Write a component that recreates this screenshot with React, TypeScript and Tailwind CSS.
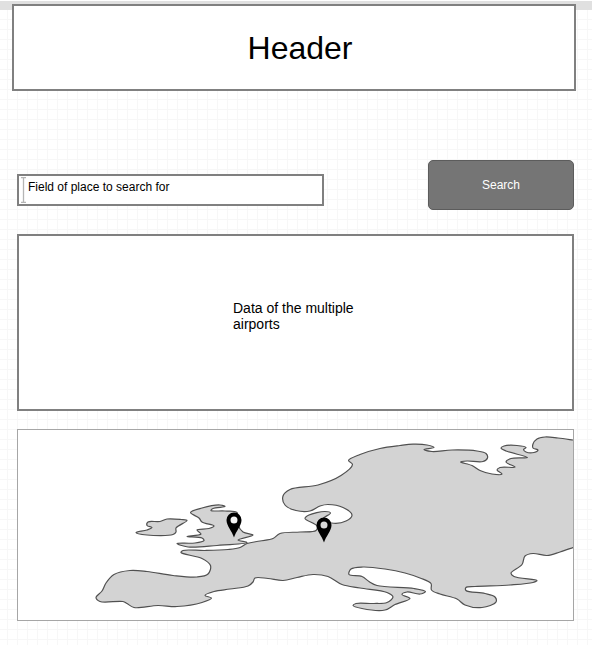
import React from "react";

type Point = [number, number];

const mainland: Point[] = [
  [580, 441], [573, 440], [558, 438], [545, 437], [537, 439], [533, 444], [533, 448], [538, 450], [534, 452.5], [526, 452], [523.5, 449.5],
  [526, 447.5], [517, 445.5], [504, 446], [501, 448], [506, 451], [527.5, 457.5], [511, 458.5], [506, 462], [515, 467],
  [500, 467.5], [497, 470], [502, 474], [492, 474], [480, 470.5], [472, 465.5], [460.5, 462], [467, 461], [483, 461.5], [487.5, 458],
  [486, 453.5], [477, 451], [452, 450], [432, 451.5], [424, 449.5], [434, 447.5], [427, 445], [413, 444.2], [400, 445.5],
  [380, 448.5], [360, 454.5], [348.5, 460.5], [352.5, 464.5], [341, 475.5], [318, 485], [290, 489.5], [283, 496], [285, 505],
  [296, 510.5], [310, 511], [320, 506], [328, 504.5], [343, 507.5], [352, 515], [346, 521], [331.5, 523], [323, 519], [330.5, 513],
  [325, 511.5], [309, 515], [305, 518.5], [317, 526], [316, 530.5], [300, 532], [280, 533.5], [273, 538.5], [260, 541], [247, 543.5],
  [240, 547.5], [228, 549.5], [205, 550.5], [183, 550.5], [181, 552.5], [202, 558.5], [210.5, 565.5], [208, 574], [197, 577],
  [173, 575.5], [147, 571.5], [130, 570.5], [114, 574.5], [106, 583], [102, 591], [96, 597.5], [100, 601.5], [123, 601.5],
  [127, 603.5], [134, 607.5], [158, 605.5], [177, 606.5], [202, 602.5], [211.5, 598], [205, 595.5], [214, 591.5], [230, 589],
  [248, 586], [253, 582], [255, 578], [268, 578.5], [283, 580.5], [297, 577.5], [313, 574.5], [328, 576.5], [342, 584.5],
  [360, 588], [387, 592.5], [393, 597], [387, 602.5], [374, 603.5], [356, 603.5], [353, 605.5], [362, 608.5], [385, 610],
  [395, 604.5], [410, 598.5], [402, 594.5], [407, 592], [420, 594], [425.5, 591.5], [414, 588.5], [377, 585.5], [369, 581.5],
  [362, 576.5], [349, 574.5], [351, 569], [363, 567], [385, 569], [405, 573], [420, 578], [431, 583.5], [431.5, 590],
  [440, 594], [457, 599], [465, 605], [482, 607.5], [496, 602], [495, 597], [485, 593.5], [466, 590.5], [466, 587.5],
  [475, 586.5], [510, 585], [533, 582.5], [537, 580.5], [514, 576.5], [511, 573], [522, 564.5], [525, 556], [533, 553.5],
  [547, 555.5], [560, 552], [573, 547.5], [580, 545],
];

const britain: Point[] = [
  [225, 506.5], [220, 505], [202, 508], [190.5, 512.5], [199, 518], [202, 522], [214, 526], [209, 528.5], [197, 530], [201, 534],
  [187, 536.5], [202, 538], [204, 540.5], [195, 543], [177, 543.5], [188, 547], [217, 545.5], [247, 542.5], [238, 540],
  [253, 535], [243, 532], [238, 525], [237, 512.5], [225, 511], [211, 510.5], [213, 508.5],
];

const ireland: Point[] = [
  [187, 520.5], [181, 519.5], [167, 519], [160, 521.5], [148, 522], [147, 525.5], [152, 527.5], [147, 530], [136, 532.5],
  [147, 535], [173, 534.5], [176, 532], [176, 528],
];

// Centripetal Catmull-Rom curve through every point of a coastline.
function coastline(points: Point[]): string {
  const n = points.length;
  const at = (i: number) => points[(i + n) % n];
  const gap = (p: Point, q: Point) => Math.sqrt(Math.hypot(q[0] - p[0], q[1] - p[1]));
  const handle = (before: Point, p: Point, after: Point): Point => {
    const u = gap(before, p);
    const v = gap(p, after);
    const axis = (k: 0 | 1) =>
      p[k] + (v * v * (p[k] - before[k]) + u * u * (after[k] - p[k])) / (3 * u * (u + v));
    return [axis(0), axis(1)];
  };
  let d = `M${at(0)[0]} ${at(0)[1]}`;
  for (let i = 0; i < n; i++) {
    const out = handle(at(i - 1), at(i), at(i + 1));
    const into = handle(at(i + 2), at(i + 1), at(i));
    d += `C${out[0]} ${out[1]} ${into[0]} ${into[1]} ${at(i + 1)[0]} ${at(i + 1)[1]}`;
  }
  return d + "Z";
}

function Pin({ x, y, fill }: { x: number; y: number; fill: string }) {
  return (
    <g transform={`translate(${x} ${y})`}>
      <circle r="4" fill={fill} />
      <path
        fillRule="evenodd"
        d="M0 17.500C-2 11-7.500 6-7.500 0A7.500 7.500 0 0 1 7.500 0C7.500 6 2 11 0 17.500ZM0-3.500A3.500 3.500 0 1 0 0 3.500A3.500 3.500 0 1 0 0-3.500Z"
      />
    </g>
  );
}

function AirportMap() {
  return (
    <svg viewBox="18 430 555 190" className="block h-auto w-full" role="img" aria-label="Map of Europe">
      <g fill="#d3d3d3" stroke="#505050" strokeWidth="1.2" strokeLinejoin="round">
        <path d={coastline(mainland)} />
        <path d={coastline(britain)} />
        <path d={coastline(ireland)} />
      </g>
      <Pin x={234} y={520} fill="#f5f5f5" />
      <Pin x={324} y={525} fill="#d9d9d9" />
    </svg>
  );
}

export default function App() {
  return (
    <div className="min-h-screen bg-white bg-[linear-gradient(to_right,#f7f7f7_1px,transparent_1px),linear-gradient(to_bottom,#f7f7f7_1px,transparent_1px)] bg-[size:10px_10px] bg-[position:7px_9px] font-['Liberation_Sans',Arial,sans-serif] text-black">
      <div className="bg-[linear-gradient(to_bottom,#ffffff_1px,#e0e0e0_1px,#e0e0e0_10px,transparent_10px)] pt-1 pr-4 pl-3">
        <header className="flex h-[87px] items-center justify-center border-2 border-[#808080] bg-white pl-3">
          <h1 className="text-[32px] leading-10">Header</h1>
        </header>
      </div>
      <main className="pt-[69px] pr-[18px] pb-6 pl-[17px]">
        <form className="flex items-end gap-[104px]" onSubmit={(event) => event.preventDefault()}>
          <div className="mb-1 flex h-8 min-w-0 flex-1 border-2 border-[#808080] bg-white">
            <svg viewBox="0 0 5 26" className="mt-px ml-0.5 h-[26px] w-[5px] shrink-0" aria-hidden="true">
              <path d="M0 .500H5M2.500 .500V25.500M0 25.500H5" fill="none" stroke="#b5b5b5" strokeWidth="1.300" />
            </svg>
            <input
              type="text"
              aria-label="Place to search for"
              defaultValue="Field of place to search for"
              className="ml-0.5 h-[22px] min-w-0 flex-1 bg-transparent text-xs outline-none"
            />
          </div>
          <button
            type="submit"
            className="h-[50px] w-[146px] rounded-[5px] border border-[#5c5c5c] bg-[#757575] text-xs text-white"
          >
            Search
          </button>
        </form>
        <section className="mt-6 flex h-[177px] justify-center border-2 border-[#808080] bg-white pt-16">
          <p className="w-[125px] text-sm leading-4">Data of the multiple airports</p>
        </section>
        <section className="mt-[18px] border border-[#a6a6a6] bg-white">
          <AirportMap />
        </section>
      </main>
    </div>
  );
}
